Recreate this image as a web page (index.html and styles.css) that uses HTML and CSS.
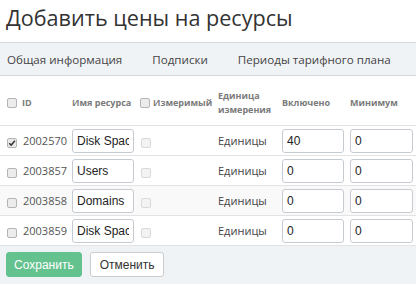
FILE: index.html
```html
<!DOCTYPE html>
<html lang="ru">
<head>
<meta charset="utf-8">
<link rel="stylesheet" href="styles.css">
</head>
<body>
<h1 class="title">Добавить цены на ресурсы</h1>
<nav class="tabs">
  <span class="tab">Общая информация</span>
  <span class="tab">Подписки</span>
  <span class="tab">Периоды тарифного плана</span>
</nav>
<table class="grid">
  <colgroup>
    <col class="c-sel"><col class="c-id"><col class="c-name"><col class="c-meas"><col class="c-unit"><col class="c-inc"><col class="c-min">
  </colgroup>
  <thead>
    <tr>
      <th class="sel"><span class="cb"></span></th>
      <th class="id">ID</th>
      <th class="nw">Имя ресурса</th>
      <th class="meas nw"><span class="cb"></span><span class="lbl">Измеримый</span></th>
      <th>Единица измерения</th>
      <th>Включено</th>
      <th>Минимум</th>
    </tr>
  </thead>
  <tbody>
    <tr>
      <td class="sel"><span class="cb checked"><svg viewBox="0 0 10 10" width="8" height="8"><path d="M1.5 5.2 L4 7.6 L8.6 2.2" fill="none" stroke="#333" stroke-width="1.8"/></svg></span></td>
      <td class="id">2002570</td>
      <td><input class="field" value="Disk Space"></td>
      <td class="meas"><span class="cb dis"></span></td>
      <td class="unit">Единицы</td>
      <td><input class="field" value="40"></td>
      <td><input class="field wide" value="0"></td>
    </tr>
    <tr>
      <td class="sel"><span class="cb"></span></td>
      <td class="id">2003857</td>
      <td><input class="field" value="Users"></td>
      <td class="meas"><span class="cb dis"></span></td>
      <td class="unit">Единицы</td>
      <td><input class="field" value="0"></td>
      <td><input class="field wide" value="0"></td>
    </tr>
    <tr class="hl">
      <td class="sel"><span class="cb"></span></td>
      <td class="id">2003858</td>
      <td><input class="field" value="Domains"></td>
      <td class="meas"><span class="cb dis"></span></td>
      <td class="unit">Единицы</td>
      <td><input class="field" value="0"></td>
      <td><input class="field wide" value="0"></td>
    </tr>
    <tr>
      <td class="sel"><span class="cb"></span></td>
      <td class="id">2003859</td>
      <td><input class="field" value="Disk Space"></td>
      <td class="meas"><span class="cb dis"></span></td>
      <td class="unit">Единицы</td>
      <td><input class="field" value="0"></td>
      <td><input class="field wide" value="0"></td>
    </tr>
  </tbody>
</table>
<footer class="actions">
  <button class="btn primary">Сохранить</button>
  <button class="btn">Отменить</button>
</footer>
</body>
</html>
```

FILE: styles.css
```css
* { box-sizing: border-box; }
html, body { margin: 0; padding: 0; background: #fff; }
body {
  width: 416px;
  height: 284px;
  overflow: hidden;
  font-family: "Open Sans", "DejaVu Sans", sans-serif;
  color: #333;
}
.title {
  margin: 0 0 8px 0;
  padding: 2px 0 0 6px;
  font-size: 21.6px;
  font-weight: 400;
  line-height: 32px;
  color: #333;
  white-space: nowrap;
}
.tabs {
  display: flex;
  gap: 30px;
  align-items: center;
  height: 34px;
  padding-left: 7px;
  background: #f0f3f6;
  border-top: 1px solid #d5d9de;
  border-bottom: 1px solid #d5d9de;
  font-size: 11.6px;
  color: #444;
  white-space: nowrap;
}
.tab { flex: 0 0 auto; }
.grid {
  margin-top: 4px;
  width: 416px;
  table-layout: fixed;
  border-collapse: separate;
  border-spacing: 0;
}
.c-sel { width: 20px; }
.c-id { width: 50px; }
.c-name { width: 68px; }
.c-meas { width: 78px; }
.c-unit { width: 64px; }
.c-inc { width: 68px; }
.c-min { width: 68px; }
.grid th {
  height: 46px;
  padding: 0 0 0 2px;
  text-align: left;
  vertical-align: middle;
  font-size: 9px;
  font-weight: 700;
  line-height: 14px;
  color: #7a7a7a;
  border-bottom: 1px solid #e3e3e3;
}
.grid th.nw { white-space: nowrap; overflow: visible; }
.grid td {
  height: 30px;
  padding: 0 0 0 2px;
  vertical-align: middle;
  border-bottom: 1px solid #e3e3e3;
  font-size: 11px;
  white-space: nowrap;
}
.grid tr.hl td { background: #f9f9f9; }
.grid .sel { padding-left: 7px; }
.grid td.id { padding-left: 3px; color: #555; }
.grid td.meas { padding-left: 3px; }
.grid .unit { color: #444; }
.lbl { margin-left: 3px; vertical-align: middle; }
.cb {
  display: inline-flex;
  align-items: center;
  justify-content: center;
  width: 10px;
  height: 10px;
  border: 1px solid #b5b5b5;
  border-radius: 2px;
  background: #ececec;
  vertical-align: middle;
}
td .cb { position: relative; top: 1px; }
.cb.dis { border-color: #d9d9d9; background: #f3f3f3; }
.cb.checked { background: #e8e8e8; }
.field {
  display: block;
  width: 62px;
  height: 24px;
  padding: 0 4px;
  border: 1px solid #c6cbd1;
  border-radius: 3px;
  background: #fff;
  font-family: "Liberation Sans", Arial, sans-serif;
  font-size: 12px;
  color: #222;
  outline: none;
}
.field.wide { width: 63px; }
.actions {
  display: flex;
  gap: 8px;
  height: 39px;
  padding: 6px 6px 0 6px;
  background: #f0f3f6;
}
.btn {
  height: 25px;
  padding: 0 9px;
  border: 1px solid #ccc;
  border-radius: 3px;
  background: #fff;
  font-family: "Liberation Sans", Arial, sans-serif;
  font-size: 12px;
  color: #333;
}
.btn.primary {
  padding: 0 7px;
  background: #64c28f;
  border-color: #64c28f;
  color: #fff;
}
```
